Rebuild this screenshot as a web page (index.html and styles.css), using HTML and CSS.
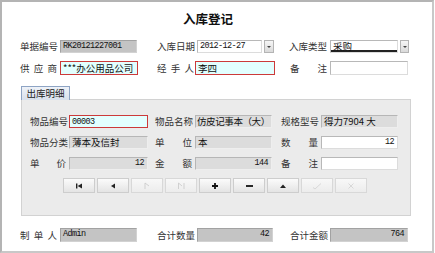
FILE: index.html
```html
<!DOCTYPE html>
<html>
<head>
<meta charset="utf-8">
<link rel="stylesheet" href="styles.css">
</head>
<body>
<div class="frame">
  <div class="title">入库登记</div>

  <div class="row r1">
    <span class="lbl w40">单据编号</span><span class="inp gray mono w77">RK20121227001</span>
    <span class="lbl w40 ml20">入库日期</span><span class="inp white mono w65">2012-12-27</span><span class="ddbtn"><i></i></span>
    <span class="lbl w41 ml15">入库类型</span><span class="inp white sel w68">采购</span><span class="ddbtn narrow"><i></i></span>
  </div>

  <div class="row r2">
    <span class="lbl w40">供 应 商</span><span class="inp req w78">***办公用品公司</span>
    <span class="lbl w38 ml19">经 手 人</span><span class="inp req w80">李四</span>
    <span class="lbl w40 ml15">备 注</span><span class="inp white w78"></span>
  </div>

  <div class="tab">出库明细</div>
  <div class="panel">
    <div class="prow">
      <span class="lbl w39">物品编号</span><span class="inp req mono w79">00003</span>
      <span class="lbl w40 ml7">物品名称</span><span class="inp lgray tight w77">仿皮记事本（大）</span>
      <span class="lbl w40 ml9">规格型号</span><span class="inp lgray w77">得力7904 大</span>
    </div>
    <div class="prow">
      <span class="lbl w39">物品分类</span><span class="inp lgray w79">薄本及信封</span>
      <span class="lbl w40 ml7">单 位</span><span class="inp lgray w77">本</span>
      <span class="lbl w40 ml9">数 量</span><span class="inp white mono num w77">12</span>
    </div>
    <div class="prow">
      <span class="lbl w39">单 价</span><span class="inp lgray mono num w79">12</span>
      <span class="lbl w40 ml7">金 额</span><span class="inp lgray mono num w77">144</span>
      <span class="lbl w40 ml9">备 注</span><span class="inp white w77"></span>
    </div>
    <div class="btns">
      <span class="btn"><svg width="8" height="6" viewBox="0 0 8 6"><rect x="1" y="0.5" width="1.4" height="5" fill="#222"/><path d="M7 0.5 L2.6 3 L7 5.5 Z" fill="#222"/></svg></span>
      <span class="btn"><svg width="8" height="6" viewBox="0 0 8 6"><path d="M6 0.5 L2 3 L6 5.5 Z" fill="#222"/></svg></span>
      <span class="btn off"><svg width="8" height="8" viewBox="0 0 8 8"><path d="M2 7 V1 L6 4" fill="none" stroke="#c8c8c8" stroke-width="0.8"/></svg></span>
      <span class="btn off"><svg width="9" height="8" viewBox="0 0 9 8"><path d="M1.5 7 V1 L5 4 M7 1 V7" fill="none" stroke="#c8c8c8" stroke-width="0.8"/></svg></span>
      <span class="btn"><svg width="8" height="8" viewBox="0 0 8 8"><path d="M4 1 V7 M1 4 H7" stroke="#111" stroke-width="1.8"/></svg></span>
      <span class="btn"><svg width="9" height="8" viewBox="0 0 9 8"><path d="M1 4 H8" stroke="#111" stroke-width="1.8"/></svg></span>
      <span class="btn"><svg width="8" height="6" viewBox="0 0 8 6"><path d="M1 5 L4 1.5 L7 5 Z" fill="#222"/></svg></span>
      <span class="btn off"><svg width="10" height="8" viewBox="0 0 10 8"><path d="M1 5.5 L3 7 L9 1.5" fill="none" stroke="#d0d0d0" stroke-width="0.8"/></svg></span>
      <span class="btn off"><svg width="8" height="8" viewBox="0 0 8 8"><path d="M1.5 1.5 L6.5 6.5 M6.5 1.5 L1.5 6.5" fill="none" stroke="#d0d0d0" stroke-width="0.8"/></svg></span>
    </div>
  </div>

  <div class="row r3">
    <span class="lbl w40">制 单 人</span><span class="inp gray mono w77">Admin</span>
    <span class="lbl w40 ml20">合计数量</span><span class="inp gray mono num w76">42</span>
    <span class="lbl w40 ml17">合计金额</span><span class="inp gray mono num w78">764</span>
  </div>
</div>
</body>
</html>
```

FILE: styles.css
```css
* { box-sizing: border-box; }
html, body { margin: 0; padding: 0; background: #fff; }
body {
  font-family: "Noto Sans CJK SC", "Noto Sans", sans-serif;
  font-size: 9.5px;
  color: #222;
}
.frame {
  width: 434px;
  height: 253px;
  border: 2px solid #b4b4b4;
  border-right-color: #c8c8c8;
  border-bottom-color: #c8c8c8;
  padding-left: 18px;
  background: #fff;
}
.title {
  width: 376px;
  height: 38px;
  line-height: 34px;
  text-align: center;
  font-size: 12.5px;
  font-weight: bold;
  color: #111;
}
.row { display: flex; align-items: center; height: 13px; }
.r2 { margin-top: 8px; height: 14px; }
.r3 { margin-top: 12px; height: 14px; }

.lbl {
  display: block;
  height: 13px;
  line-height: 13px;
  padding-right: 3px;
  text-align: justify;
  text-align-last: justify;
  white-space: nowrap;
  color: #333;
}
.w38 { width: 38px; padding-right: 1px; }
.w39 { width: 39px; }
.w40 { width: 40px; }
.w41 { width: 41px; padding-right: 4px; }
.ml7 { margin-left: 7px; }
.ml9 { margin-left: 9px; }
.ml15 { margin-left: 15px; }
.ml17 { margin-left: 17px; }
.ml19 { margin-left: 19px; }
.ml20 { margin-left: 20px; }

.inp {
  display: block;
  height: 100%;
  line-height: 11px;
  padding: 0 2px;
  border: 1px solid #c0c0c0;
  white-space: nowrap;
  overflow: hidden;
  color: #111;
}
.w65 { width: 65px; }
.w68 { width: 68px; }
.w76 { width: 76px; }
.w77 { width: 77px; }
.w78 { width: 78px; }
.w79 { width: 79px; }
.w80 { width: 80px; }

.gray {
  background: #c4c4c4;
  border-color: #a2a2a2 #d2d2d2 #d2d2d2 #a2a2a2;
}
.lgray {
  background: #dcdcdc;
  border-color: #b6b6b6 #eeeeee #eeeeee #b6b6b6;
}
.white {
  background: #fff;
  border-color: #b8b8b8 #dcdcdc #dcdcdc #b8b8b8;
}
.req {
  background: #e2ffff;
  border: 1px solid #cc3a3a;
  line-height: 12px;
}
.tight { padding: 0 1px; letter-spacing: -0.4px; }
.sel { box-shadow: inset 0 -2px 0 #222; line-height: 11px; }
.mono {
  font-family: "Liberation Mono", "DejaVu Sans Mono", monospace;
  font-size: 8.5px;
  letter-spacing: -0.6px;
}
.num { text-align: right; padding-right: 3px; }

.ddbtn {
  display: flex;
  align-items: center;
  justify-content: center;
  width: 10px;
  height: 13px;
  margin-left: 2px;
  border: 1px solid #b4b4b4;
  background: linear-gradient(#f6f6f6, #dadada);
}
.ddbtn.narrow { width: 9px; }
.ddbtn i {
  display: block;
  width: 0; height: 0;
  border-left: 2px solid transparent;
  border-right: 2px solid transparent;
  border-top: 2px solid #444;
}

.tab {
  width: 49px;
  height: 14px;
  margin-top: 11px;
  margin-left: 1px;
  line-height: 13px;
  text-align: center;
  border: 1px solid #8ea4c4;
  border-bottom: none;
  background: linear-gradient(#eef2f8, #d8e0ec);
  color: #222;
  position: relative;
  z-index: 1;
}
.panel {
  width: 390px;
  height: 117px;
  margin-left: 1px;
  margin-top: -1px;
  border: 1px solid #d2d2d2;
  background: #ebebeb;
  padding: 15px 0 0 8px;
}
.prow { display: flex; align-items: center; height: 13px; margin-bottom: 8px; }
.btns {
  display: flex;
  gap: 2px;
  margin-top: 4px;
  margin-left: 33px;
}
.btn {
  display: flex;
  align-items: center;
  justify-content: center;
  width: 32px;
  height: 15px;
  border: 1px solid #cdcdcd;
  background: linear-gradient(#fbfbfb, #e4e4e4);
}
.btn.off { background: linear-gradient(#f8f8f8, #ececec); border-color: #d8d8d8; }
```
